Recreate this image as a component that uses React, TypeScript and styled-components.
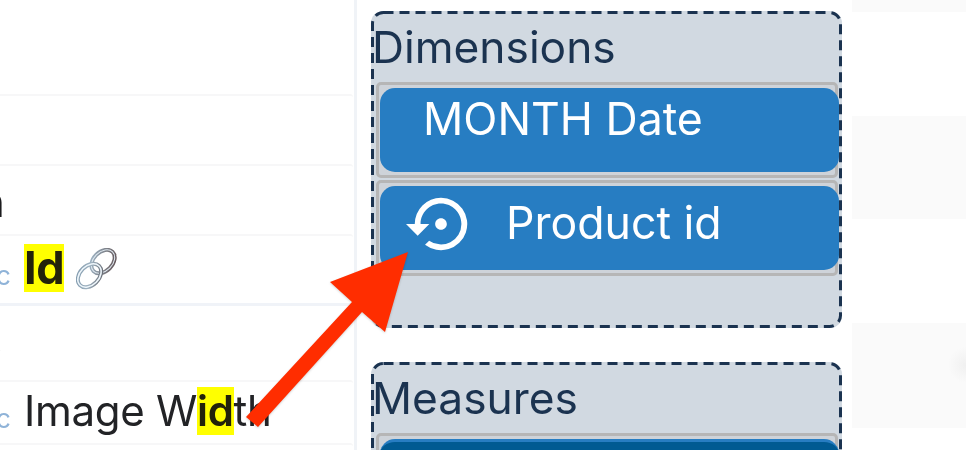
import styled, { createGlobalStyle } from "styled-components";
import { MdSettingsBackupRestore } from "react-icons/md";

const GlobalStyle = createGlobalStyle`
  html, body {
    margin: 0;
    padding: 0;
    background: #fff;
    overflow: hidden;
  }
  body {
    font-family: Inter, "Liberation Sans", sans-serif;
  }
`;

function ChainIcon() {
  return (
    <ChainSvg viewBox="0 0 42 42" aria-hidden="true">
      <defs>
        <linearGradient id="chainBack" x1="0" y1="0" x2="1" y2="1">
          <stop offset="0" stopColor="#a3bccf" />
          <stop offset="0.55" stopColor="#7d8087" />
          <stop offset="1" stopColor="#5f4d50" />
        </linearGradient>
        <linearGradient id="chainFront" x1="0" y1="0" x2="1" y2="1">
          <stop offset="0" stopColor="#7f98ac" />
          <stop offset="0.5" stopColor="#9fb2c0" />
          <stop offset="1" stopColor="#5d5f66" />
        </linearGradient>
      </defs>
      <g transform="rotate(-45 27 13.5)" fill="none">
        <ellipse cx="27" cy="13.5" rx="13.5" ry="9.5" stroke="url(#chainBack)" strokeWidth="4" />
        <ellipse cx="27" cy="13.5" rx="13.5" ry="9.5" stroke="#dfe9f0" strokeWidth="1.1" />
      </g>
      <g transform="rotate(-45 13.5 27.5)" fill="none">
        <ellipse cx="13.5" cy="27.5" rx="13.5" ry="9.5" stroke="url(#chainFront)" strokeWidth="4" />
        <ellipse cx="13.5" cy="27.5" rx="13.5" ry="9.5" stroke="#eef6fb" strokeWidth="1.6" />
      </g>
    </ChainSvg>
  );
}

function Arrow() {
  return (
    <ArrowSvg viewBox="0 0 966 450" aria-hidden="true">
      <polygon points="408,252 330,282 352,302 246,417 258,427 362,312 385,332" fill="#ff2d00" />
    </ArrowSvg>
  );
}

function DashedFrame({ height }: { height: number }) {
  return (
    <FrameSvg height={height} aria-hidden="true">
      <rect x="1.5" y="1.5" width="468" height={height - 3} rx="11" fill="none" stroke="#1b3350" strokeWidth="3" strokeDasharray="10 6" />
    </FrameSvg>
  );
}

export default function App() {
  return (
    <Page>
      <GlobalStyle />
      <FieldPanel>
        <Row $height={94} $first />
        <Row $height={70} />
        <Row $height={70}>
          <ClippedName>n</ClippedName>
        </Row>
        <Row $height={69}>
          <TypeTag $top={24}>c</TypeTag>
          <FieldName $top={8}>
            <Mark $bold>Id</Mark>
          </FieldName>
          <ChainIcon />
        </Row>
        <Row $height={77} $heavy>
          <StrayMark>,</StrayMark>
        </Row>
        <Row $height={63}>
          <TypeTag $top={21}>c</TypeTag>
          <FieldName $top={5}>
            Image W<Mark>id</Mark>th
          </FieldName>
        </Row>
        <Row $height={7} />
      </FieldPanel>

      <DropColumn>
        <DropZone $height={317}>
          <DashedFrame height={317} />
          <ZoneTitle>Dimensions</ZoneTitle>
          <ChipSlot>
            <Chip $inset={43} $top={8}>MONTH Date</Chip>
          </ChipSlot>
          <ChipSlot>
            <Chip $inset={26} $top={14}>
              <ChipIcon>
                <MdSettingsBackupRestore />
              </ChipIcon>
              Product id
            </Chip>
          </ChipSlot>
        </DropZone>
        <DropZone $height={110}>
          <DashedFrame height={110} />
          <ZoneTitle>Measures</ZoneTitle>
          <ChipSlot>
            <Chip $dark />
          </ChipSlot>
        </DropZone>
      </DropColumn>

      <PreviewColumn>
        <PreviewStrip $height={12} />
        <PreviewStrip $height={103} />
        <PreviewStrip $height={105} $glow />
      </PreviewColumn>

      <Arrow />
    </Page>
  );
}

const Page = styled.div`
  position: relative;
  display: flex;
  width: 966px;
  height: 450px;
  overflow: hidden;
  background: #fff;
  filter: blur(0.35px);
`;

const FieldPanel = styled.div`
  flex: none;
  width: 354px;
  height: 450px;
  border-right: 3px solid #f0f3f7;
  overflow: hidden;
`;

const Row = styled.div<{ $height: number; $first?: boolean; $heavy?: boolean }>`
  display: flex;
  align-items: flex-start;
  box-sizing: border-box;
  width: 353px;
  height: ${(p) => p.$height}px;
  overflow: hidden;
  border-top: ${(p) => (p.$first ? "none" : p.$heavy ? "3px solid #f0f3f8" : "2px solid #f7f7f8")};
  border-top-right-radius: 3px;
`;

const ClippedName = styled.span`
  margin-left: -20px;
  margin-top: 13px;
  font-size: 42px;
  line-height: 46px;
  color: #1c1c1e;
`;

const StrayMark = styled.span`
  margin-left: -4px;
  margin-top: 25px;
  font-size: 20px;
  line-height: 28px;
  color: #555;
`;

const TypeTag = styled.span<{ $top: number }>`
  flex: none;
  width: 24px;
  margin-top: ${(p) => p.$top}px;
  margin-left: -4px;
  margin-right: 4px;
  font-size: 26px;
  line-height: 32px;
  color: #8fb3d8;
`;

const FieldName = styled.span<{ $top: number }>`
  margin-top: ${(p) => p.$top}px;
  font-size: 42px;
  line-height: 48px;
  letter-spacing: -0.3px;
  color: #222326;
  white-space: nowrap;
`;

const Mark = styled.mark<{ $bold?: boolean }>`
  display: inline-block;
  height: 48px;
  background: #ffff00;
  color: #22220a;
  font-size: ${(p) => (p.$bold ? 45 : 42)}px;
  font-weight: ${(p) => (p.$bold ? 700 : 600)};
  vertical-align: top;
`;

const ChainSvg = styled.svg`
  flex: none;
  width: 42px;
  height: 42px;
  margin-top: 12px;
  margin-left: 12px;
`;

const DropColumn = styled.div`
  flex: none;
  display: flex;
  flex-direction: column;
  gap: 34px;
  width: 471px;
  margin-left: 14px;
  padding-top: 11px;
`;

const DropZone = styled.section<{ $height: number }>`
  position: relative;
  flex: none;
  box-sizing: border-box;
  height: ${(p) => p.$height}px;
  padding: 13px 0 0 1px;
  background: #d1d9e1;
  border-radius: 12px;
`;

const FrameSvg = styled.svg`
  position: absolute;
  top: 0;
  left: 0;
  width: 471px;
  z-index: 1;
`;

const ZoneTitle = styled.h3`
  margin: 0;
  height: 58px;
  font-size: 44.3px;
  font-weight: 400;
  line-height: 46px;
  color: #1b3350;
`;

const ChipSlot = styled.div`
  box-sizing: border-box;
  width: 462px;
  height: 96px;
  margin-left: 4px;
  padding: 3px 0 3px 1px;
  background: #ced3d9;
  border: 3px solid #b6b6b6;
  border-radius: 5px;
  & + & {
    margin-top: 2px;
  }
`;

const Chip = styled.div<{ $dark?: boolean; $inset?: number; $top?: number }>`
  display: flex;
  align-items: flex-start;
  box-sizing: border-box;
  width: calc(100% + 4px);
  height: 84px;
  padding-left: ${(p) => p.$inset ?? 26}px;
  padding-top: ${(p) => p.$top ?? 0}px;
  background: ${(p) => (p.$dark ? "#005a92" : "#277dc2")};
  border-top: ${(p) => (p.$dark ? "3px solid #277dc2" : "none")};
  border-radius: 15px;
  font-size: 44.6px;
  line-height: 46px;
  color: #fff;
  white-space: nowrap;
`;

const ChipIcon = styled.span`
  display: block;
  width: 70px;
  height: 70px;
  margin-top: -11px;
  margin-right: 30px;
  font-size: 70px;
  line-height: 0;
`;

const PreviewColumn = styled.div`
  flex: none;
  display: flex;
  flex-direction: column;
  gap: 104px;
  width: 114px;
  margin-left: 10px;
`;

const PreviewStrip = styled.div<{ $height: number; $glow?: boolean }>`
  flex: none;
  height: ${(p) => p.$height}px;
  background: ${(p) =>
    p.$glow
      ? "radial-gradient(circle at 100% 40%, #f0f0f0 0, #fafafa 18px)"
      : "#fafafa"};
`;

const ArrowSvg = styled.svg`
  position: absolute;
  inset: 0;
  width: 966px;
  height: 450px;
  z-index: 2;
  filter: drop-shadow(0 1px 1px rgba(0, 0, 0, 0.18));
`;
